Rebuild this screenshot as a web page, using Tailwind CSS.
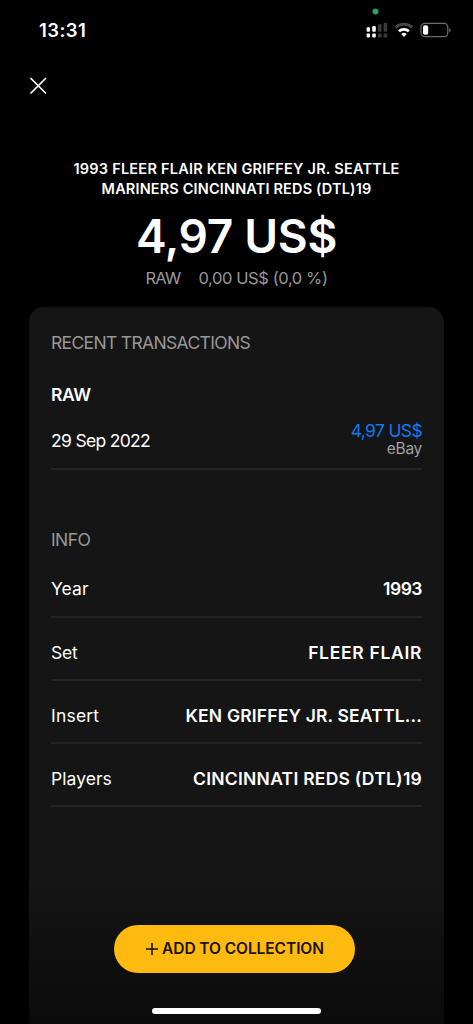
<!DOCTYPE html>
<html lang="en">
<head>
<meta charset="utf-8">
<title>Card details</title>
<script src="https://cdn.jsdelivr.net/npm/@tailwindcss/browser@4"></script>
</head>
<body class="bg-black">
<main class="relative flex h-[1024px] w-[473px] flex-col overflow-hidden bg-black font-['Inter',sans-serif] text-white">
  <header class="flex h-[60px] shrink-0 items-center justify-between pr-[21px] pl-[39px]">
    <span class="text-[18.5px] leading-[20px] font-semibold tracking-[0.45px]">13:31</span>
    <svg width="88" height="60" viewBox="364 0 88 60" fill="#fff">
      <circle cx="375.500" cy="11.500" r="3" fill="#30a060"/>
      <rect x="366.600" y="27.200" width="3.400" height="4.600" rx="1"/>
      <rect x="372.200" y="26" width="3.600" height="5.800" rx="1"/>
      <g fill="#3a3a3c">
        <rect x="378" y="24.300" width="3.600" height="7.500" rx="1"/>
        <rect x="383.600" y="22.700" width="3.600" height="9.100" rx="1"/>
        <rect x="378" y="33.500" width="3.600" height="4" rx="1"/>
        <rect x="383.600" y="33.500" width="3.600" height="4" rx="1"/>
      </g>
      <rect x="366.600" y="33.500" width="3.400" height="4" rx="1"/>
      <rect x="372.200" y="33.500" width="3.600" height="4" rx="1"/>
      <path d="M395.500 27.500a12.200 12.200 0 0 1 16.800 0" fill="none" stroke="#48484a" stroke-width="2.700"/>
      <path d="M398.900 31.300a7.200 7.200 0 0 1 10 0" fill="none" stroke="#fff" stroke-width="2.700"/>
      <path d="M401.200 33.900a4 4 0 0 1 5.400 0L403.900 36.900z"/>
      <rect x="421" y="23.300" width="26.800" height="13.400" rx="4" fill="none" stroke="#6c6c70" stroke-width="1.200"/>
      <rect x="423" y="25.200" width="5.200" height="9.600" rx="1.800"/>
      <path d="M449.200 28.200q1.600.600 1.600 1.900t-1.600 1.900z" fill="#6c6c70"/>
    </svg>
  </header>
  <div class="flex h-[99px] shrink-0 pt-[17px] pl-[29px]">
    <svg width="18" height="18" viewBox="0 0 18 18" fill="none" stroke="#fff" stroke-width="1.700" stroke-linecap="round"><path d="M2 1.500 16.500 16M16.500 1.500 2 16"/></svg>
  </div>
  <section class="flex h-[148px] shrink-0 flex-col items-center">
    <h1 class="text-center text-[14.5px] leading-[20px] font-semibold whitespace-nowrap"><span class="tracking-[0.24px]">1993 FLEER FLAIR KEN GRIFFEY JR. SEATTLE</span><br><span class="tracking-[0.16px]">MARINERS CINCINNATI REDS (DTL)19</span></h1>
    <p class="mt-[7px] text-[46px] leading-[60px] font-semibold tracking-[-0.3px]">4,97 US$</p>
    <p class="mt-[2px] flex gap-[18px] text-[16.5px] leading-[20px] font-normal text-[#989898]"><span class="tracking-[-0.8px]">RAW</span><span class="tracking-[-0.4px]">0,00 US$ (0,0 %)</span></p>
  </section>
  <section class="mx-[29px] flex h-[717px] shrink-0 flex-col rounded-t-[15px] bg-linear-to-b from-[#151515] from-80% to-[#0b0b0b] px-[22px] text-[17.5px] leading-[20px] font-normal">
    <h2 class="mt-[26px] tracking-[-0.66px] text-[#989898]">RECENT TRANSACTIONS</h2>
    <h3 class="mt-[32px] font-semibold tracking-[-0.4px]">RAW</h3>
    <div class="mt-[8px] flex h-[57px] items-center justify-between border-b-2 border-[#242424]">
      <span class="mt-[1px] tracking-[-0.68px]">29 Sep 2022</span>
      <div class="flex flex-col items-end pb-[2px]">
        <span class="leading-[18px] tracking-[-0.65px] text-[#0d7bf2]">4,97 US$</span>
        <span class="text-[15.5px] leading-[18px] tracking-[-0.3px] text-[#a0a0a0]">eBay</span>
      </div>
    </div>
    <h2 class="mt-[60px] tracking-[-0.6px] text-[#989898]">INFO</h2>
    <dl class="mt-[5px]">
      <div class="flex h-[63px] items-center justify-between border-b-2 border-[#242424] pt-[7px]"><dt class="tracking-[0.05px]">Year</dt><dd class="font-semibold tracking-[-0.5px]">1993</dd></div>
      <div class="flex h-[63px] items-center justify-between border-b-2 border-[#242424] pt-[8px]"><dt class="tracking-[-0.2px]">Set</dt><dd class="font-semibold tracking-[0.68px]">FLEER FLAIR</dd></div>
      <div class="flex h-[63px] items-center justify-between border-b-2 border-[#242424] pt-[8px]"><dt class="tracking-[0.2px]">Insert</dt><dd class="font-semibold tracking-[0.17px]">KEN GRIFFEY JR. SEATTL...</dd></div>
      <div class="flex h-[63px] items-center justify-between border-b-2 border-[#242424] pt-[8px]"><dt class="tracking-[0.05px]">Players</dt><dd class="font-semibold tracking-[0.25px]">CINCINNATI REDS (DTL)19</dd></div>
    </dl>
    <button class="mt-[117.5px] mr-[5px] flex h-[48.5px] w-[241px] shrink-0 items-center justify-center gap-[4px] self-center rounded-full bg-[#ffba10] pt-[1px] pl-[2px] text-[15.5px] font-semibold text-[#1a1204]">
      <svg class="shrink-0" width="12" height="12" viewBox="0 0 12 12" fill="none" stroke="currentColor" stroke-width="1.600"><path d="M6 0v12M0 6h12"/></svg>
      <span class="tracking-[-0.07px]">ADD TO COLLECTION</span>
    </button>
    <div class="mt-[35px] h-[6px] w-[169px] shrink-0 self-center rounded-full bg-white"></div>
  </section>
</main>
</body>
</html>
